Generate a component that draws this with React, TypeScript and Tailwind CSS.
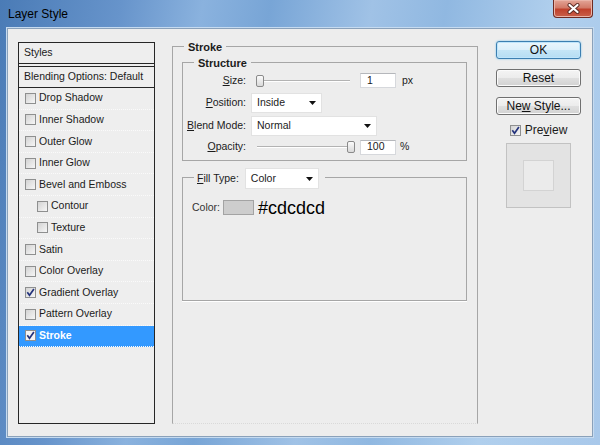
import React from 'react';

type StyleItem = { label: string; checked?: boolean; indent?: boolean; active?: boolean };

const styleItems: StyleItem[] = [
  { label: 'Drop Shadow' },
  { label: 'Inner Shadow' },
  { label: 'Outer Glow' },
  { label: 'Inner Glow' },
  { label: 'Bevel and Emboss' },
  { label: 'Contour', indent: true },
  { label: 'Texture', indent: true },
  { label: 'Satin' },
  { label: 'Color Overlay' },
  { label: 'Gradient Overlay', checked: true },
  { label: 'Pattern Overlay' },
  { label: 'Stroke', checked: true, active: true },
];

const CheckBox = ({ checked, light }: { checked?: boolean; light?: boolean }) => (
  <span
    className={`flex h-[11px] w-[11px] shrink-0 items-center justify-center border border-[#8e8f8f] ${
      light ? 'bg-[#f4f4f4]' : 'bg-[linear-gradient(135deg,#d3d3d3,#f6f6f6)]'
    }`}
  >
    {checked && (
      <svg width="9" height="9" viewBox="0 0 9 9">
        <path d="M1.3 4.3 L3.5 7.2 L7.9 1.1" fill="none" stroke="#24337c" strokeWidth="1.7" />
      </svg>
    )}
  </span>
);

const Slider = ({ atEnd, width }: { atEnd?: boolean; width: string }) => (
  <div className={`relative h-[12px] ${width}`}>
    <div className="absolute left-[2px] right-[2px] top-[5px] h-[2px] border-t border-[#b3b3b3] bg-white" />
    <div
      className={`absolute top-0 h-[12px] w-[8px] rounded-[2px] border border-[#8a8a8a] bg-[linear-gradient(#fbfbfb,#d9d9d9)] ${
        atEnd ? 'right-0' : 'left-[1px]'
      }`}
    />
  </div>
);

const NumberField = ({ value }: { value: string }) => (
  <div className="flex h-[15px] w-[36px] items-center border border-[#d6d8dc] border-t-[#b5b7bb] bg-white pl-[6px]">
    {value}
  </div>
);

const Select = ({ value, width, tall }: { value: string; width: string; tall?: boolean }) => (
  <div
    className={`flex ${tall ? 'h-[21px]' : 'h-[20px]'} ${width} items-center justify-between border border-[#e2e2e2] bg-white pl-[5px] pr-[5px]`}
  >
    <span>{value}</span>
    <svg width="7" height="4" viewBox="0 0 7 4">
      <path d="M0 0H7L3.5 4Z" fill="#111" />
    </svg>
  </div>
);

const Button = ({ children, primary }: { children: React.ReactNode; primary?: boolean }) => (
  <div
    className={`flex h-[18px] w-[85px] items-center justify-center rounded-[3px] border text-[12px] text-[#111] ${
      primary
        ? 'border-[#3c7fb1] bg-[linear-gradient(#eaf6fd_0%,#dcf0fb_48%,#c4e5f6_52%,#b5ddf3_100%)] shadow-[inset_0_0_0_1px_#bfe5fb,0_0_2px_#6fc3ef]'
        : 'border-[#707070] bg-[linear-gradient(#f4f4f4_0%,#ececec_48%,#dfdfdf_52%,#d2d2d2_100%)] shadow-[inset_0_0_0_1px_#fbfbfb]'
    }`}
  >
    <span>{children}</span>
  </div>
);

const Label = ({ u, rest }: { u: string; rest: string }) => (
  <div className="w-[63px] shrink-0 text-right">
    <span className="underline underline-offset-[1px]">{u}</span>
    {rest}
  </div>
);

export default function App() {
  return (
    <div className="relative flex h-[445px] w-[600px] flex-col bg-[linear-gradient(100deg,#4a7bb6_0%,#6794cb_18%,#8ab2de_30%,#78a5d6_40%,#a0c2e6_55%,#90b8e1_66%,#b0cfed_82%,#a8c8ea_100%)] font-['Liberation_Sans',Arial,sans-serif] text-[10.5px] text-[#1b1b1b]">
      {/* title bar */}
      <div className="flex h-[28px] shrink-0 items-center pl-[8px] text-[12px] text-black">Layer Style</div>
      <div className="absolute right-[7px] top-0 flex h-[18px] w-[40px] items-center justify-center rounded-b-[4px] border border-t-0 border-[#6e2a22] bg-[linear-gradient(#e3a597_0%,#d27a68_45%,#c0412c_55%,#c9604a_100%)] shadow-[inset_0_0_0_1px_#eab4a8]">
        <svg width="13" height="11" viewBox="0 0 13 11">
          <path d="M2.5 2 L10.5 9 M10.5 2 L2.5 9" stroke="#5a2a24" strokeWidth="4" strokeLinecap="round" />
          <path d="M2.5 2 L10.5 9 M10.5 2 L2.5 9" stroke="#ffffff" strokeWidth="2.2" strokeLinecap="round" />
        </svg>
      </div>

      {/* client area */}
      <div className="mx-[7px] flex h-[409px] items-start border border-[#8aa1ba] bg-[#ededed] pl-[10px] pt-[12px] shadow-[0_0_0_1px_#c6dbf0]">
        {/* styles list */}
        <div className="mt-[1px] flex h-[382px] w-[137px] shrink-0 flex-col border border-[#262626] bg-[#eeeeee]">
          <div className="flex h-[21px] items-center border-b border-[#262626] pl-[5px]">Styles</div>
          <div className="h-[2px]" />
          <div className="flex h-[22px] items-center border-y border-[#262626] pl-[5px]">Blending Options: Default</div>
          {styleItems.map((item) => (
            <div
              key={item.label}
              className={`flex h-[21.6px] items-center gap-[3px] border-b border-dotted border-[#fafafa] ${
                item.indent ? 'pl-[18px]' : 'pl-[6px]'
              } ${item.active ? 'bg-[#3399ff] font-bold text-white' : ''}`}
            >
              <CheckBox checked={item.checked} light={item.active} />
              <span>{item.label}</span>
            </div>
          ))}
        </div>

        {/* stroke group */}
        <div className="relative ml-[17px] mt-[5px] h-[378px] w-[306px] shrink-0 border border-[#a6a6a6] border-b-[#d9d9d9] pl-[9px] pt-[15px] [border-bottom-style:dotted]">
          <span className="absolute left-[11px] top-[-8px] bg-[#ededed] px-[4px] text-[11px] font-bold">Stroke</span>

          {/* structure */}
          <div className="relative h-[99px] w-[285px] border border-[#a6a6a6] pt-[10px]">
            <span className="absolute left-[11px] top-[-8px] bg-[#ededed] px-[4px] text-[11px] font-bold">Structure</span>
            <div className="flex h-[15px] items-center">
              <Label u="S" rest="ize:" />
              <div className="ml-[9px]">
                <Slider width="w-[97px]" />
              </div>
              <div className="ml-[8px]">
                <NumberField value="1" />
              </div>
              <span className="ml-[6px]">px</span>
            </div>
            <div className="mt-[5px] flex h-[20px] items-center">
              <Label u="P" rest="osition:" />
              <div className="ml-[5px]">
                <Select value="Inside" width="w-[71px]" />
              </div>
            </div>
            <div className="mt-[3px] flex h-[20px] items-center">
              <Label u="B" rest="lend Mode:" />
              <div className="ml-[5px]">
                <Select value="Normal" width="w-[126px]" />
              </div>
            </div>
            <div className="mt-[3px] flex h-[16px] items-center">
              <Label u="O" rest="pacity:" />
              <div className="ml-[9px]">
                <Slider width="w-[100px]" atEnd />
              </div>
              <div className="ml-[5px]">
                <NumberField value="100" />
              </div>
              <span className="ml-[4px]">%</span>
            </div>
          </div>

          {/* fill */}
          <div className="relative mt-[16px] h-[124px] w-[285px] border border-[#a6a6a6] pl-[9px] pt-[22px] shadow-[0_1px_0_#ffffff]">
            <div className="absolute left-[11px] top-[-10px] flex h-[21px] items-center bg-[#ededed] pl-[3px] pr-[6px]">
              <span>
                <span className="underline underline-offset-[1px]">F</span>ill Type:
              </span>
              <div className="ml-[6px]">
                <Select value="Color" width="w-[74px]" tall />
              </div>
            </div>
            <div className="flex h-[15px] items-center">
              <span className="text-[#333]">Color:</span>
              <div className="ml-[3px] h-[15px] w-[31px] border border-[#a3a3a3] bg-[#cdcdcd]" />
              <span className="ml-[4px] text-[18px] leading-none text-black">#cdcdcd</span>
            </div>
          </div>
        </div>

        {/* buttons */}
        <div className="ml-[18px] flex w-[85px] shrink-0 flex-col">
          <Button primary>OK</Button>
          <div className="mt-[10px]">
            <Button>Reset</Button>
          </div>
          <div className="mt-[10px]">
            <Button>
              Ne<span className="underline underline-offset-[1px]">w</span> Style...
            </Button>
          </div>
          <div className="mt-[8px] flex h-[14px] items-center justify-center gap-[4px] text-[12px]">
            <CheckBox checked />
            <span>
              Pre<span className="underline underline-offset-[1px]">v</span>iew
            </span>
          </div>
          <div className="mx-auto mt-[6px] flex h-[65px] w-[65px] items-center justify-center border border-[#c2c2c2] bg-[#e3e3e3]">
            <div className="h-[31px] w-[31px] border border-[#d3d3d3] bg-[#ebebeb]" />
          </div>
        </div>
      </div>
    </div>
  );
}
